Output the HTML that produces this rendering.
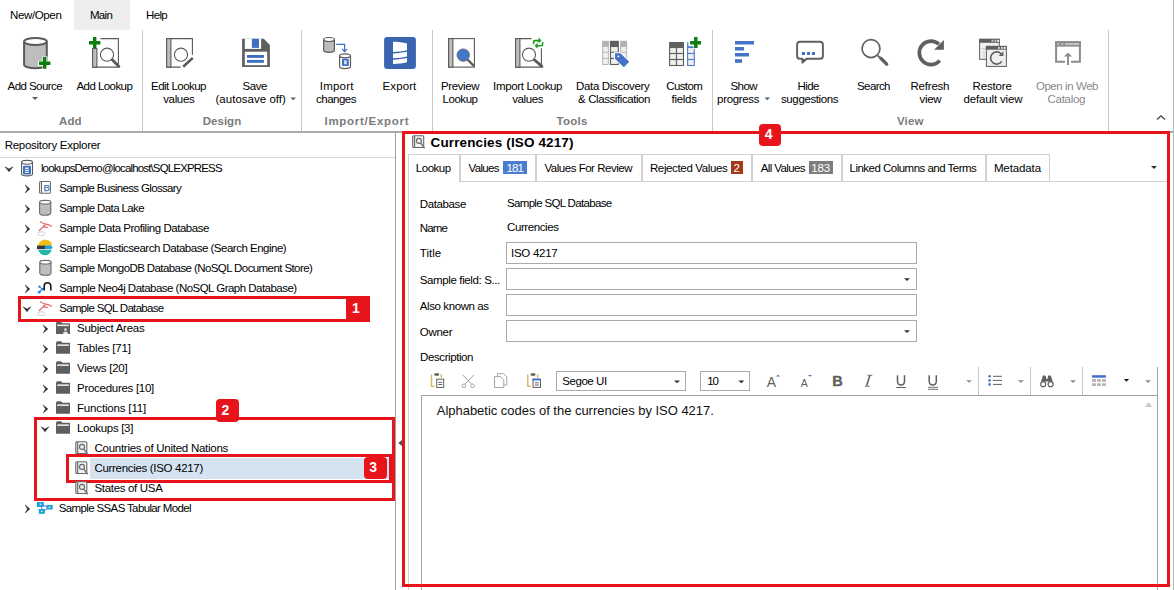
<!DOCTYPE html>
<html><head><meta charset="utf-8"><style>
html,body{margin:0;padding:0;width:1174px;height:590px;overflow:hidden;background:#fff;position:relative;font-family:"Liberation Sans",sans-serif}
.t{position:absolute;white-space:nowrap;line-height:1;color:#000}
.a{position:absolute;box-sizing:border-box}
svg{position:absolute;overflow:visible}
</style></head><body>
<!-- tabs -->
<div class="a" style="left:74px;top:0;width:56px;height:30px;background:#eeeeee"></div>
<!-- ribbon separators -->
<div class="a" style="left:142px;top:30px;width:1px;height:101px;background:#c8c8c8"></div>
<div class="a" style="left:301px;top:30px;width:1px;height:101px;background:#c8c8c8"></div>
<div class="a" style="left:432px;top:30px;width:1px;height:101px;background:#c8c8c8"></div>
<div class="a" style="left:712px;top:30px;width:1px;height:101px;background:#c8c8c8"></div>
<div class="a" style="left:1108px;top:30px;width:1px;height:101px;background:#c8c8c8"></div>
<!-- ribbon bottom -->
<div class="a" style="left:0;top:131px;width:1174px;height:2px;background:#ababab"></div>
<!-- left panel -->
<div class="a" style="left:0;top:157px;width:395px;height:1px;background:#d4d4d4"></div>
<div class="a" style="left:395px;top:133px;width:1px;height:457px;background:#a0a0a0"></div>
<!-- selection -->
<div class="a" style="left:90px;top:458px;width:299px;height:21px;background:#d5e3f1"></div>
<!-- right panel -->
<div class="a" style="left:1173px;top:0;width:1px;height:590px;background:#b4b4b4"></div>
<!-- tabs -->
<div class="a" style="left:408px;top:181px;width:760px;height:1px;background:#d0d0d0"></div>
<div class="a" style="left:408px;top:154px;width:1px;height:436px;background:#d0d0d0"></div>
<div class="a" style="left:408px;top:154px;width:642px;height:1px;background:#d0d0d0"></div>
<div class="a" style="left:459px;top:154px;width:2px;height:28px;background:#d0d0d0"></div>
<div class="a" style="left:409px;top:181px;width:50px;height:1px;background:#fff"></div>
<div class="a" style="left:535px;top:154px;width:2px;height:27px;background:#d0d0d0"></div>
<div class="a" style="left:641px;top:154px;width:2px;height:27px;background:#d0d0d0"></div>
<div class="a" style="left:751px;top:154px;width:2px;height:27px;background:#d0d0d0"></div>
<div class="a" style="left:841px;top:154px;width:2px;height:27px;background:#d0d0d0"></div>
<div class="a" style="left:985px;top:154px;width:2px;height:27px;background:#d0d0d0"></div>
<div class="a" style="left:1049px;top:154px;width:1px;height:27px;background:#d0d0d0"></div>
<!-- badges -->
<div class="a" style="left:503px;top:161px;width:24px;height:13px;background:#4a7dd0"></div>
<div class="a" style="left:731px;top:161px;width:12px;height:13px;background:#a23a1a"></div>
<div class="a" style="left:809px;top:161px;width:24px;height:13px;background:#7d7d7d"></div>
<!-- inputs -->
<div class="a" style="left:506px;top:242px;width:411px;height:22px;border:1px solid #ababab"></div>
<div class="a" style="left:506px;top:268px;width:411px;height:22px;border:1px solid #ababab"></div>
<div class="a" style="left:506px;top:294px;width:411px;height:22px;border:1px solid #ababab"></div>
<div class="a" style="left:506px;top:320px;width:411px;height:22px;border:1px solid #ababab"></div>
<!-- font combos -->
<div class="a" style="left:556px;top:371px;width:130px;height:20px;border:1px solid #ababab"></div>
<div class="a" style="left:700px;top:371px;width:50px;height:20px;border:1px solid #ababab"></div>
<!-- editor -->
<div class="a" style="left:421px;top:395px;width:737px;height:195px;border:1px solid #a0a0a0;border-bottom:none"></div>
<div class="a" style="left:1157px;top:367px;width:1px;height:28px;background:#a0a0a0"></div>
<div class="a" style="left:978px;top:367px;width:1px;height:28px;background:#c8c8c8"></div>
<div class="a" style="left:1030px;top:367px;width:1px;height:28px;background:#c8c8c8"></div>
<div class="a" style="left:1082px;top:367px;width:1px;height:28px;background:#c8c8c8"></div>
<!-- red annotation boxes -->
<div class="a" style="left:402px;top:131px;width:768px;height:456px;border:3px solid #e8141c"></div>
<div class="a" style="left:18px;top:296px;width:331px;height:26px;border:3px solid #e8141c"></div>
<div class="a" style="left:346px;top:296px;width:24px;height:26px;background:#e8141c"></div>
<div class="a" style="left:34px;top:417px;width:361px;height:84px;border:3px solid #e8141c"></div>
<div class="a" style="left:66px;top:454px;width:326px;height:29px;border:3px solid #e8141c"></div>
<div class="a" style="left:216px;top:399px;width:23px;height:23px;background:#e8141c;border-radius:4px"></div>
<div class="a" style="left:364px;top:457px;width:23px;height:22px;background:#e8141c;border-radius:4px"></div>
<div class="a" style="left:759px;top:124px;width:22px;height:22px;background:#e8141c;border-radius:4px"></div>
<svg width="1174" height="590" style="left:0;top:0">
<!-- ===== RIBBON ICONS ===== -->
<!-- Add Source: cylinder + plus -->
<g stroke="#5a5a5a" stroke-width="2">
 <path d="M24.1,41.5 V64.7 A11.35,3.5 0 0 0 46.8,64.7 V41.5" fill="#bdbdbd"/>
 <ellipse cx="35.45" cy="41.5" rx="11.35" ry="3.5" fill="#fff"/>
</g>
<path d="M38,61 h4.5 v-4.5 h5 v4.5 h4.5 v5 h-4.5 v4.5 h-5 v-4.5 h-4.5z" fill="#fff"/>
<path d="M39,61.5 h4 v-4.5 h3.4 v4.5 h4 v3.4 h-4 v3.9 h-3.4 v-3.9 h-4z" fill="#0a7d0a"/>
<!-- Add Lookup -->
<g fill="none" stroke="#5a5a5a" stroke-width="1.1">
 <path d="M100.5,38.6 H118.4 V67.1 H92.6 V48.5"/>
 <rect x="92.6" y="48.5" width="4.3" height="18.6" fill="#bdbdbd"/>
 <circle cx="107" cy="54.7" r="6.6"/>
</g>
<path d="M112.3,59.8 L118.9,66.4" stroke="#5a5a5a" stroke-width="2.8" stroke-linecap="round"/>
<path d="M89,41 h4 v-4 h3.4 v4 h4 v3.4 h-4 v3.8 h-3.4 v-3.8 h-4z" fill="#0a7d0a"/>
<!-- Edit Lookup -->
<g fill="none" stroke="#5a5a5a" stroke-width="1.1">
 <path d="M180.7,67.1 H166.6 V38.6 H192.4 V54.7"/>
 <rect x="166.6" y="38.6" width="4.3" height="28.5" fill="#bdbdbd"/>
 <circle cx="181" cy="54.7" r="6.6"/>
</g>
<path d="M183.2,66.8 L192.8,57.9" stroke="#fff" stroke-width="4.5"/>
<path d="M183.2,66.8 L192.8,57.9" stroke="#5a5a5a" stroke-width="2.6"/>
<!-- Save -->
<path d="M242.1,38.8 H263.8 L269.9,44.9 V66.9 H242.1Z" fill="#5f5f5f"/>
<rect x="244.8" y="38.8" width="16.3" height="10.1" fill="#fff"/>
<rect x="251.9" y="38.8" width="7.1" height="9.1" fill="#3e6fc1"/>
<rect x="244.8" y="51.7" width="22.4" height="13.5" fill="#fff"/>
<rect x="247" y="55" width="16.9" height="2.9" fill="#3e6fc1"/>
<rect x="247" y="59.9" width="16.9" height="2.9" fill="#3e6fc1"/>
<!-- Import changes -->
<g stroke="#5a5a5a" stroke-width="1.2">
 <path d="M323.7,39.5 V50.3 A5.35,2 0 0 0 334.4,50.3 V39.5" fill="#bdbdbd"/>
 <ellipse cx="329.05" cy="39.5" rx="5.35" ry="2" fill="#fff"/>
 <path d="M339.6,55.8 V66.6 A5.45,2 0 0 0 350.5,66.6 V55.8" fill="#fff"/>
 <ellipse cx="345.05" cy="55.8" rx="5.45" ry="2" fill="#fff"/>
</g>
<rect x="342" y="58.8" width="6.8" height="7.1" rx="1" fill="#3e6fc1"/>
<rect x="344" y="60.3" width="2.8" height="4" fill="#cfdcf2"/>
<path d="M336.2,44.4 H344.6 V51" fill="none" stroke="#3e6fc1" stroke-width="1.2"/>
<path d="M342.2,49 L344.6,51.6 L347,49" fill="none" stroke="#3e6fc1" stroke-width="1.2"/>
<!-- Export -->
<rect x="384.1" y="37.1" width="31.8" height="31.8" rx="3.2" fill="#3a64b0"/>
<path d="M393,41.8 C398,41.8 403,42.4 407,43.6 V50.3 C403,51.3 398,51.9 393,52.1Z" fill="#fff"/>
<path d="M393,53.5 C398,53.3 403,52.7 407,51.8 V56.6 C403,57.6 398,58.1 393,58.3Z" fill="#fff"/>
<path d="M393,59.7 C398,59.5 403,58.9 407,58 V62.3 C403,63.4 398,63.9 393,64Z" fill="#fff"/>
<!-- Preview Lookup -->
<g fill="none" stroke="#5a5a5a" stroke-width="1.1">
 <rect x="448.6" y="38.6" width="25.8" height="28.5" fill="#fff"/>
 <rect x="448.6" y="38.6" width="4.3" height="28.5" fill="#bdbdbd"/>
</g>
<path d="M467.5,59.5 L473.9,66" stroke="#5a5a5a" stroke-width="2.4"/>
<circle cx="463.2" cy="55.1" r="6.2" fill="#4577c8" stroke="#5a5a5a" stroke-width="0.8"/>
<!-- Import Lookup values -->
<g fill="none" stroke="#5a5a5a" stroke-width="1.1">
 <path d="M531.4,38.6 H515.6 V67.1 H541.4 V48.3"/>
 <rect x="515.6" y="38.6" width="4.3" height="28.5" fill="#bdbdbd"/>
 <circle cx="529" cy="54.7" r="6.6"/>
</g>
<path d="M534.3,59.8 L541.9,66.4" stroke="#5a5a5a" stroke-width="2.8" stroke-linecap="round"/>
<g fill="none" stroke="#1e9a1e" stroke-width="1.6">
 <path d="M533.6,44.2 V41.8 Q533.6,40.6 535,40.6 H539.6"/>
 <path d="M542.6,42 V44.6 Q542.6,45.8 541.2,45.8 H536.4"/>
</g>
<path d="M538.5,37.6 L541.5,40.6 L538.5,43.6Z" fill="#1e9a1e"/>
<path d="M537.6,42.8 L534.6,45.8 L537.6,48.8Z" fill="#1e9a1e"/>
<!-- Data Discovery -->
<rect x="602.1" y="40.8" width="6.8" height="5.7" fill="#b3b3b3"/>
<rect x="602.6" y="46.5" width="5.8" height="18" fill="#efefef" stroke="#b8b8b8" stroke-width="1"/>
<path d="M602.1,52.3 H608.9 M602.1,58.4 H608.9" stroke="#b8b8b8"/>
<rect x="620.1" y="40.8" width="7" height="5.7" fill="#b3b3b3"/>
<rect x="620.6" y="46.5" width="6" height="18" fill="#efefef" stroke="#b8b8b8" stroke-width="1"/>
<path d="M620.1,52.3 H627.1 M620.1,58.4 H627.1" stroke="#b8b8b8"/>
<rect x="609.9" y="40.8" width="9" height="5.7" fill="#5f5f5f"/>
<rect x="610.5" y="46.5" width="7.8" height="18" fill="#efefef" stroke="#5f5f5f" stroke-width="1.1"/>
<path d="M609.9,52.3 H618.9 M609.9,58.4 H618.9" stroke="#5f5f5f" stroke-width="1.1"/>
<path d="M614,52.3 H620.8 L630.6,62 L623.9,68.6 L614,58.9Z" fill="#fff"/>
<path d="M615,53.3 H620.4 L629.2,61.8 L623.8,67.2 L615,58.7Z" fill="#4472c4"/>
<circle cx="618.4" cy="56.4" r="0.9" fill="#fff"/>
<!-- Custom fields -->
<rect x="669.1" y="42" width="14.9" height="5.5" fill="#5f5f5f"/>
<g fill="#efefef" stroke="#5f5f5f" stroke-width="1.1">
 <rect x="669.6" y="47.5" width="6.9" height="6" />
 <rect x="676.5" y="47.5" width="7" height="6" />
 <rect x="669.6" y="53.5" width="6.9" height="6" />
 <rect x="676.5" y="53.5" width="7" height="6" />
 <rect x="669.6" y="59.5" width="6.9" height="6" />
 <rect x="676.5" y="59.5" width="7" height="6" />
</g>
<g fill="#efefef" stroke="#4a7fd0" stroke-width="1.1">
 <rect x="687.6" y="47.5" width="6.7" height="6" />
 <rect x="687.6" y="53.5" width="6.7" height="6" />
 <rect x="687.6" y="59.5" width="6.7" height="6" />
</g>
<rect x="687.1" y="42" width="1.3" height="6" fill="#4a7fd0"/>
<rect x="687.1" y="46.2" width="7.7" height="1.6" fill="#4a7fd0"/>
<path d="M689,40.4 h4.6 v-4.3 h4.6 v4.3 h4 v4.6 h-4 v4 h-4.6 v-4 h-4.6z" fill="#fff"/>
<path d="M690.1,41 h4 v-3.9 h3.4 v3.9 h3.5 v3.4 h-3.5 v3.5 h-3.4 v-3.5 h-4z" fill="#0a7d0a"/>
<!-- Show progress -->
<g fill="#4472c4">
 <rect x="735" y="41" width="19" height="3.5"/>
 <rect x="735" y="47" width="9" height="3.5"/>
 <rect x="735" y="53" width="14" height="3.5"/>
 <rect x="735" y="59.2" width="7" height="3.6"/>
</g>
<!-- Hide suggestions -->
<path d="M800,41.8 H820 Q822.9,41.8 822.9,44.7 V55.9 Q822.9,58.8 820,58.8 H806.6 L802.4,62.6 V58.8 H800 Q797.1,58.8 797.1,55.9 V44.7 Q797.1,41.8 800,41.8Z" fill="#fff" stroke="#5f5f5f" stroke-width="1.9" stroke-linejoin="round"/>
<path d="M802.2,58.8 V63.8 L806.8,59.6Z" fill="#5f5f5f"/>
<rect x="801.9" y="52" width="3.1" height="3" fill="#4472c4"/>
<rect x="807" y="52" width="3.1" height="3" fill="#4472c4"/>
<rect x="811.9" y="52" width="3.1" height="3" fill="#4472c4"/>
<!-- Search -->
<circle cx="871" cy="48.6" r="8.95" fill="none" stroke="#5f5f5f" stroke-width="1.7"/>
<path d="M877.5,55.3 L880,57.8" stroke="#5f5f5f" stroke-width="1.8"/>
<path d="M880.8,58.3 L886.7,64.1" stroke="#5f5f5f" stroke-width="3.4" stroke-linecap="round"/>
<!-- Refresh -->
<path d="M938.9,44.2 A11.7,11.7 0 1 0 939.8,60.6" fill="none" stroke="#5f5f5f" stroke-width="3.7"/>
<path d="M934.1,49.8 H943.9 V40.1Z" fill="#5f5f5f"/>
<!-- Restore default view -->
<rect x="979.6" y="39.3" width="19.7" height="20" fill="#efefef" stroke="#5f5f5f" stroke-width="1"/>
<rect x="979.1" y="38.8" width="20.7" height="4" fill="#5f5f5f"/>
<path d="M980,48.5 H999 M984,49 V59" stroke="#cfcfcf" stroke-width="1"/>
<rect x="991.5" y="39.8" width="1.8" height="2" fill="#cfcfcf"/>
<rect x="994.5" y="39.8" width="1.8" height="2" fill="#cfcfcf"/>
<rect x="997.3" y="39.8" width="1.8" height="2" fill="#fff"/>
<rect x="986.4" y="46.4" width="20" height="20" fill="#efefef" stroke="#5f5f5f" stroke-width="1"/>
<rect x="985.9" y="45.9" width="21" height="3.8" fill="#5f5f5f"/>
<rect x="998" y="46.9" width="1.8" height="2" fill="#cfcfcf"/>
<rect x="1001" y="46.9" width="1.8" height="2" fill="#cfcfcf"/>
<rect x="1003.8" y="46.9" width="1.8" height="2" fill="#fff"/>
<path d="M1001,53.6 A6.1,6.1 0 1 0 1001.8,61.4" fill="none" stroke="#5f5f5f" stroke-width="1.6"/>
<path d="M998.6,56 H1003.4 V51.2Z" fill="#5f5f5f"/>
<!-- Open in web catalog -->
<path d="M1065,61.8 H1056.1 V42.2 H1079.9 V61.8 H1071" fill="none" stroke="#8c8c8c" stroke-width="2"/>
<rect x="1055.1" y="41.2" width="25.8" height="5.4" fill="#8c8c8c"/>
<rect x="1057.3" y="43.1" width="2" height="1.8" fill="#c8c8c8"/>
<rect x="1061.3" y="43.1" width="2" height="1.8" fill="#c8c8c8"/>
<rect x="1065" y="43.1" width="14" height="1.8" fill="#c8c8c8"/>
<path d="M1068,56 V64.9" stroke="#8c8c8c" stroke-width="1.9"/>
<path d="M1063.9,56.4 H1072.1 L1068,52.6Z" fill="#8c8c8c"/>
<!-- ribbon dropdown arrows -->
<path d="M32,97 H38 L35,100Z" fill="#5a5a5a"/>
<path d="M290.5,97.6 H296 L293.2,100.3Z" fill="#5a5a5a"/>
<path d="M764.6,97.6 H770 L767.3,100.3Z" fill="#5a5a5a"/>
<!-- collapse ribbon ^ -->
<path d="M1157,119.5 L1161,115.8 L1165,119.5" fill="none" stroke="#444" stroke-width="1.3"/>
</svg>
<svg width="1174" height="590" style="left:0;top:0">
<!-- ===== TREE CHEVRONS ===== -->
<path d="M25.2,185.1 L29.9,189 L25.2,192.9 L27.5,189Z M25.2,205.1 L29.9,209 L25.2,212.9 L27.5,209Z M25.2,225.1 L29.9,229 L25.2,232.9 L27.5,229Z M25.2,245.1 L29.9,249 L25.2,252.9 L27.5,249Z M25.2,265.1 L29.9,269 L25.2,272.9 L27.5,269Z M25.2,285.1 L29.9,289 L25.2,292.9 L27.5,289Z M43.2,325.1 L47.900000000000006,329 L43.2,332.9 L45.5,329Z M43.2,345.1 L47.900000000000006,349 L43.2,352.9 L45.5,349Z M43.2,365.1 L47.900000000000006,369 L43.2,372.9 L45.5,369Z M43.2,385.1 L47.900000000000006,389 L43.2,392.9 L45.5,389Z M43.2,405.1 L47.900000000000006,409 L43.2,412.9 L45.5,409Z M25.2,505.1 L29.9,509 L25.2,512.9 L27.5,509Z M5.1,166.8 L9,171.8 L12.9,166.8 L9,169Z M23.1,306.8 L27,311.8 L30.9,306.8 L27,309Z M41.1,426.8 L45,431.8 L48.9,426.8 L45,429Z " fill="#2e2e2e" stroke="#2e2e2e" stroke-width="0.5" stroke-linejoin="round"/>
<!-- row0 db icon -->
<g stroke="#5a5a5a" stroke-width="1.1" fill="#fff">
 <path d="M21.6,162.3 V174 A5.45,1.9 0 0 0 32.5,174 V162.3"/>
 <ellipse cx="27.05" cy="162.3" rx="5.45" ry="1.9"/>
</g>
<rect x="23" y="165.8" width="8" height="8.6" rx="1.2" fill="#3e6fc1"/>
<path d="M25,167.6 h3.8 v1.4 h-3.8z M25,169.8 h3.8 v1.4 h-3.8z M25,172 h3.8 v1.0 h-3.8z" fill="#dfe8f6"/>
<!-- row1 glossary -->
<rect x="39.6" y="181.5" width="10.8" height="11.8" rx="1" fill="#fff" stroke="#6a6a6a" stroke-width="1.1"/>
<path d="M41.5,181.8 V193" stroke="#6a6a6a" stroke-width="1.1"/>
<text x="43.6" y="191.2" font-family="Liberation Sans" font-size="9.5" fill="#3e6fc1" stroke="#3e6fc1" stroke-width="0.25">B</text>
<!-- row2 data lake cylinder -->
<g stroke="#6a6a6a" stroke-width="1.1">
 <path d="M39.6,202.2 V213.2 A5.6,2 0 0 0 50.8,213.2 V202.2" fill="#bdbdbd"/>
 <ellipse cx="45.2" cy="202.2" rx="5.6" ry="1.8" fill="#fff"/>
</g>
<!-- row3 SQL server icon -->
<g fill="none" stroke-linecap="round">
 <path d="M39.3,230.5 L46,224.2 M40.5,221.8 Q44,224 46,224.2 Q49,224.5 51.5,226.3 M43.5,226 Q45.5,228 47.5,227.3" stroke="#e86a6a" stroke-width="1.2"/>
 <path d="M37.5,233 Q40,231 43.5,232 Q46,233.5 44,235.3 Q40.5,236.5 37.5,234.5" stroke="#c9d2de" stroke-width="1"/>
</g>
<!-- row4 elasticsearch -->
<path d="M38.5,244.3 A7.6,7.6 0 0 1 51.3,242.5 L51.3,244.8 Z" fill="#f0bf1a"/>
<path d="M38,244.8 H51.8 A7.6,7.6 0 0 1 38,244.8Z" fill="#f0bf1a"/>
<path d="M38.5,244 Q41,240 45,240 Q49,240 51.6,243.5 L51.6,245 H38Z" fill="#f0bf1a"/>
<rect x="37" y="245.6" width="8.5" height="3.6" fill="#343741"/>
<rect x="44.8" y="245.6" width="7.5" height="3.6" rx="1.6" fill="#1ba3e0"/>
<path d="M38,250 H51.8 Q49.5,255.3 45,255.3 Q40.5,255.3 38,250Z" fill="#22b5a8"/>
<!-- row5 mongodb cylinder -->
<g stroke="#6a6a6a" stroke-width="1.1">
 <path d="M39.8,262.2 V273.3 A5.6,2 0 0 0 51,273.3 V262.2" fill="#bdbdbd"/>
 <ellipse cx="45.4" cy="262.2" rx="5.6" ry="1.8" fill="#fff"/>
</g>
<!-- row6 neo4j -->
<path d="M39.5,292 L42.5,289 L39.5,287" fill="none" stroke="#1e88e5" stroke-width="1.1"/>
<circle cx="39.2" cy="292.2" r="1.4" fill="#1e88e5"/>
<circle cx="39.4" cy="286.6" r="1.2" fill="#1e88e5"/>
<circle cx="42.8" cy="289" r="1.2" fill="#1e88e5"/>
<path d="M44.2,290.5 V286 A3.3,3.3 0 0 1 50.8,286 V290.5" fill="none" stroke="#1a1a1a" stroke-width="1.6"/>
<!-- row7 SQL server icon -->
<g fill="none" stroke-linecap="round">
 <path d="M39.3,310.5 L46,304.2 M40.5,301.8 Q44,304 46,304.2 Q49,304.5 51.5,306.3 M43.5,306 Q45.5,308 47.5,307.3" stroke="#e86a6a" stroke-width="1.2"/>
 <path d="M37.5,313 Q40,311 43.5,312 Q46,313.5 44,315.3 Q40.5,316.5 37.5,314.5" stroke="#c9d2de" stroke-width="1"/>
</g>
<!-- folders level 2 -->
<g fill="#5f5f5f">
 <path d="M56,323.5 Q56,321.7 57.5,321.7 H61 L62.5,323.3 H70 V334 H56Z"/>
 <path d="M56,343 Q56,341.2 57.5,341.2 H61 L62.5,342.8 H70 V353.8 H56Z"/>
 <path d="M56,363 Q56,361.2 57.5,361.2 H61 L62.5,362.8 H70 V373.8 H56Z"/>
 <path d="M56,383 Q56,381.2 57.5,381.2 H61 L62.5,382.8 H70 V393.8 H56Z"/>
 <path d="M56,403 Q56,401.2 57.5,401.2 H61 L62.5,402.8 H70 V413.8 H56Z"/>
 <path d="M56,423 Q56,421.2 57.5,421.2 H61 L62.5,422.8 H70 V433.8 H56Z"/>
</g>
<g fill="#f2f2f2">
 <rect x="57.2" y="324.6" width="11.6" height="1.5"/>
 <rect x="57.2" y="344.4" width="11.6" height="1.5"/>
 <rect x="57.2" y="364.4" width="11.6" height="1.5"/>
 <rect x="57.2" y="384.4" width="11.6" height="1.5"/>
 <rect x="57.2" y="404.4" width="11.6" height="1.5"/>
 <rect x="57.2" y="424.4" width="11.6" height="1.5"/>
</g>
<circle cx="65.5" cy="329.5" r="1.3" fill="#e8e8e8"/>
<path d="M63,334 Q63,331.5 65.5,331.5 Q68,331.5 68,334Z" fill="#e8e8e8"/>
<!-- lookup icons level3 -->
<rect x="75.8" y="441.7" width="11" height="11.8" rx="1" fill="#f2f2f2" stroke="#666" stroke-width="1.1"/>
<path d="M77.7,442 V453.3" stroke="#666" stroke-width="1.1"/>
<circle cx="82" cy="446.9" r="2.5" fill="#eee" stroke="#666" stroke-width="1.1"/>
<path d="M83.7,449 L87.7,454.2" stroke="#777" stroke-width="1.4"/>
<rect x="75.8" y="461.7" width="11" height="11.8" rx="1" fill="#f2f2f2" stroke="#666" stroke-width="1.1"/>
<path d="M77.7,462 V473.3" stroke="#666" stroke-width="1.1"/>
<circle cx="82" cy="466.9" r="2.5" fill="#eee" stroke="#666" stroke-width="1.1"/>
<path d="M83.7,469 L87.7,474.2" stroke="#777" stroke-width="1.4"/>
<rect x="75.8" y="481.7" width="11" height="11.8" rx="1" fill="#f2f2f2" stroke="#666" stroke-width="1.1"/>
<path d="M77.7,482 V493.3" stroke="#666" stroke-width="1.1"/>
<circle cx="82" cy="486.9" r="2.5" fill="#eee" stroke="#666" stroke-width="1.1"/>
<path d="M83.7,489 L87.7,494.2" stroke="#777" stroke-width="1.4"/>

<!-- SSAS -->
<path d="M40.5,504.5 L43,511.5 L49.5,507.3Z" fill="none" stroke="#9b59d6" stroke-width="1"/>
<rect x="37" y="502" width="6.8" height="5" fill="#1aa3d3"/>
<rect x="46.5" y="505" width="6.2" height="4.5" fill="#1aa3d3"/>
<rect x="38.8" y="509" width="6" height="4.8" fill="#1aa3d3"/>
<circle cx="40.5" cy="504.3" r="0.8" fill="#fff"/>
<circle cx="49.5" cy="507.3" r="0.8" fill="#fff"/>
<circle cx="41.7" cy="511.3" r="0.8" fill="#fff"/>
<!-- splitter arrow -->
<path d="M402,440 L398.3,443 L402,446.1Z" fill="#505050"/>
<!-- ===== RIGHT PANEL ===== -->
<!-- header lookup icon -->
<rect x="412.7" y="135.7" width="11" height="11.8" rx="1" fill="#f2f2f2" stroke="#666" stroke-width="1.1"/>
<path d="M414.6,136 V147.3" stroke="#666" stroke-width="1.1"/>
<circle cx="418.9" cy="140.9" r="2.5" fill="#eee" stroke="#666" stroke-width="1.1"/>
<path d="M420.6,143 L424.6,148.2" stroke="#777" stroke-width="1.4"/>
<!-- tab dropdown -->
<path d="M1151,166 H1157 L1154,169Z" fill="#303030"/>
<!-- combo arrows -->
<path d="M904,278.2 H910 L907,281Z" fill="#303030"/>
<path d="M904,330.2 H910 L907,333Z" fill="#303030"/>
<path d="M674,380.5 H680 L677,383.3Z" fill="#303030"/>
<path d="M738.3,380.5 H744.3 L741.3,383.3Z" fill="#303030"/>
<!-- toolbar: paste1 -->
<path d="M431.5,374.5 V386.4 H434.5" fill="none" stroke="#e3b062" stroke-width="1.4"/>
<path d="M441.3,374.3 V377.8" stroke="#e3b062" stroke-width="1.4"/>
<rect x="434.3" y="373.3" width="4.8" height="2.5" rx="1" fill="#5f5f5f"/>
<rect x="436.7" y="379.2" width="7" height="8.2" fill="#fff" stroke="#5f5f5f" stroke-width="1"/>
<path d="M438.3,382.3 H442.2 M438.3,384.5 H442.2" stroke="#5f5f5f" stroke-width="1"/>
<!-- cut -->
<g fill="none" stroke="#a6a6a6" stroke-width="1">
 <circle cx="464" cy="385.8" r="1.8"/>
 <circle cx="472.6" cy="385.8" r="1.8"/>
 <path d="M465,384.2 L474,374.8 M471.6,384.2 L462.6,374.8"/>
</g>
<!-- copy -->
<g fill="#fff" stroke="#a6a6a6" stroke-width="1">
 <path d="M497.5,373.6 H503.5 L506.8,376.9 V385 H497.5Z"/>
 <path d="M494.5,376.6 H500.5 L503.8,379.9 V387.5 H494.5Z"/>
</g>
<!-- paste2 -->
<path d="M527.8,374.5 V386.4 H530.8" fill="none" stroke="#e3b062" stroke-width="1.4"/>
<path d="M537.6,374.3 V377.8" stroke="#e3b062" stroke-width="1.4"/>
<rect x="530.6" y="373.3" width="4.8" height="2.5" rx="1" fill="#5f5f5f"/>
<rect x="533" y="379.2" width="7.5" height="8.2" fill="#fff" stroke="#5f5f5f" stroke-width="1"/>
<rect x="532.5" y="378.7" width="8.5" height="1.8" fill="#4472c4"/>
<path d="M534.8,382.8 H538.8 M534.8,385 H538.8" stroke="#5f5f5f" stroke-width="1"/>
<!-- grow/shrink font -->
<text x="766.8" y="387" font-family="Liberation Sans" font-size="14" fill="#5f5f5f">A</text>
<path d="M776,376.5 H780 L778,374.8Z" fill="#4472c4"/>
<text x="800.7" y="387" font-family="Liberation Sans" font-size="10.5" fill="#5f5f5f">A</text>
<path d="M808,375 H812 L810,376.7Z" fill="#4472c4"/>
<text x="832.2" y="386.3" font-family="Liberation Sans" font-weight="bold" font-size="14.5" fill="#5f5f5f" stroke="#5f5f5f" stroke-width="0.4">B</text>
<path d="M869.8,375.5 L866.6,386" stroke="#5f5f5f" stroke-width="1.5"/><path d="M867.5,375.3 H872.3 M865,386.2 H869.8" stroke="#5f5f5f" stroke-width="0.9"/>
<!-- underline -->
<path d="M897.5,375.2 V381 Q897.5,385 901,385 Q904.5,385 904.5,381 V375.2" fill="none" stroke="#5f5f5f" stroke-width="1.5"/>
<path d="M896.3,387.5 H905.8" stroke="#5f5f5f" stroke-width="1"/>
<path d="M929.2,375.2 V381 Q929.2,385 932.8,385 Q936.3,385 936.3,381 V375.2" fill="none" stroke="#5f5f5f" stroke-width="1.5"/>
<path d="M928,387.3 H938 M928,389.3 H938" stroke="#5f5f5f" stroke-width="0.9"/>
<path d="M966.2,380.3 H971.8 L969,382.8Z" fill="#8a8a8a"/>
<!-- list -->
<circle cx="989.6" cy="376.3" r="1.3" fill="#4472c4"/>
<circle cx="989.6" cy="380.4" r="1.3" fill="#4472c4"/>
<circle cx="989.6" cy="384.4" r="1.3" fill="#4472c4"/>
<path d="M993,376.3 H1002 M993,380.4 H1002 M993,384.4 H1002" stroke="#5f5f5f" stroke-width="1"/>
<path d="M1017.7,380.3 H1024 L1020.8,382.8Z" fill="#8a8a8a"/>
<!-- binoculars -->
<path d="M1041,381.5 L1043,375.5 H1045.5 L1046.4,379 H1047.4 L1048.3,375.5 H1050.8 L1052.8,381.5Z" fill="#5f5f5f"/>
<circle cx="1043.2" cy="384.2" r="2.5" fill="#fff" stroke="#5f5f5f" stroke-width="1.2"/>
<circle cx="1050.6" cy="384.2" r="2.5" fill="#fff" stroke="#5f5f5f" stroke-width="1.2"/>
<path d="M1069.9,380.3 H1076 L1073,383Z" fill="#8a8a8a"/>
<!-- table -->
<rect x="1092" y="375.2" width="13.9" height="2.5" fill="#4472c4"/>
<g fill="#b5b5b5">
 <rect x="1092" y="379.1" width="4" height="2.7"/><rect x="1097" y="379.1" width="4" height="2.7"/><rect x="1102" y="379.1" width="4" height="2.7"/>
 <rect x="1092" y="383.3" width="4" height="2.7"/><rect x="1097" y="383.3" width="4" height="2.7"/><rect x="1102" y="383.3" width="4" height="2.7"/>
</g>
<path d="M1123.9,378.9 H1129.1 L1126.5,381.8Z" fill="#111"/>
<path d="M1145.2,380.3 H1151 L1148.1,383Z" fill="#8a8a8a"/>
<!-- editor scroll up -->
<path d="M1145,407 H1152.2 L1148.6,402Z" fill="#c8c8c8"/>
</svg>

<div class="t" style="left:10.0px;top:10.0px;font-size:11.5px;letter-spacing:-0.362px">New/Open</div>
<div class="t" style="left:90.0px;top:10.0px;font-size:11.5px;letter-spacing:-0.709px">Main</div>
<div class="t" style="left:146.0px;top:10.0px;font-size:11.5px;letter-spacing:-0.650px">Help</div>
<div class="t" style="left:7.6px;top:81.0px;font-size:11.5px;letter-spacing:-0.566px">Add Source</div>
<div class="t" style="left:76.5px;top:81.0px;font-size:11.5px;letter-spacing:-0.565px">Add Lookup</div>
<div class="t" style="left:151.0px;top:81.0px;font-size:11.5px;letter-spacing:-0.524px">Edit Lookup</div>
<div class="t" style="left:163.2px;top:94.0px;font-size:11.5px;letter-spacing:-0.348px">values</div>
<div class="t" style="left:242.5px;top:81.0px;font-size:11.5px;letter-spacing:-0.404px">Save</div>
<div class="t" style="left:215.5px;top:94.0px;font-size:11.5px;letter-spacing:0.023px">(autosave off)</div>
<div class="t" style="left:319.8px;top:81.0px;font-size:11.5px;letter-spacing:0.202px">Import</div>
<div class="t" style="left:316.1px;top:94.0px;font-size:11.5px;letter-spacing:-0.513px">changes</div>
<div class="t" style="left:382.5px;top:81.0px;font-size:11.5px;letter-spacing:0.113px">Export</div>
<div class="t" style="left:441.0px;top:81.0px;font-size:11.5px;letter-spacing:-0.400px">Preview</div>
<div class="t" style="left:442.5px;top:94.0px;font-size:11.5px;letter-spacing:-0.446px">Lookup</div>
<div class="t" style="left:493.1px;top:81.0px;font-size:11.5px;letter-spacing:-0.343px">Import Lookup</div>
<div class="t" style="left:512.2px;top:94.0px;font-size:11.5px;letter-spacing:-0.388px">values</div>
<div class="t" style="left:576.0px;top:81.0px;font-size:11.5px;letter-spacing:-0.328px">Data Discovery</div>
<div class="t" style="left:578.1px;top:94.0px;font-size:11.5px;letter-spacing:-0.414px">&amp; Classification</div>
<div class="t" style="left:666.2px;top:81.0px;font-size:11.5px;letter-spacing:-0.604px">Custom</div>
<div class="t" style="left:671.5px;top:94.0px;font-size:11.5px;letter-spacing:-0.289px">fields</div>
<div class="t" style="left:730.5px;top:81.0px;font-size:11.5px;letter-spacing:-0.589px">Show</div>
<div class="t" style="left:717.1px;top:94.0px;font-size:11.5px;letter-spacing:-0.335px">progress</div>
<div class="t" style="left:797.5px;top:81.0px;font-size:11.5px;letter-spacing:-0.550px">Hide</div>
<div class="t" style="left:781.0px;top:94.0px;font-size:11.5px;letter-spacing:-0.387px">suggestions</div>
<div class="t" style="left:857.0px;top:81.0px;font-size:11.5px;letter-spacing:-0.587px">Search</div>
<div class="t" style="left:910.5px;top:81.0px;font-size:11.5px;letter-spacing:-0.211px">Refresh</div>
<div class="t" style="left:919.5px;top:94.0px;font-size:11.5px;letter-spacing:-0.335px">view</div>
<div class="t" style="left:972.5px;top:81.0px;font-size:11.5px;letter-spacing:-0.144px">Restore</div>
<div class="t" style="left:963.5px;top:94.0px;font-size:11.5px;letter-spacing:-0.157px">default view</div>
<div class="t" style="left:1035.9px;top:81.0px;font-size:11.5px;letter-spacing:-0.431px;color:#8a8a8a">Open in Web</div>
<div class="t" style="left:1047.5px;top:94.0px;font-size:11.5px;letter-spacing:-0.273px;color:#8a8a8a">Catalog</div>
<div class="t" style="left:59.0px;top:116.0px;font-size:11.5px;letter-spacing:0.073px;font-weight:bold;color:#7b7b7b">Add</div>
<div class="t" style="left:202.7px;top:116.0px;font-size:11.5px;letter-spacing:0.032px;font-weight:bold;color:#7b7b7b">Design</div>
<div class="t" style="left:324.5px;top:116.0px;font-size:11.5px;letter-spacing:0.717px;font-weight:bold;color:#7b7b7b">Import/Export</div>
<div class="t" style="left:556.5px;top:116.0px;font-size:11.5px;letter-spacing:0.297px;font-weight:bold;color:#7b7b7b">Tools</div>
<div class="t" style="left:896.9px;top:116.0px;font-size:11.5px;letter-spacing:0.200px;font-weight:bold;color:#7b7b7b">View</div>
<div class="t" style="left:4.7px;top:140.0px;font-size:11.5px;letter-spacing:-0.277px">Repository Explorer</div>
<div class="t" style="left:40.9px;top:163.0px;font-size:11.5px;letter-spacing:-0.845px">lookupsDemo@localhost\SQLEXPRESS</div>
<div class="t" style="left:59.2px;top:183.0px;font-size:11.5px;letter-spacing:-0.644px">Sample Business Glossary</div>
<div class="t" style="left:59.2px;top:203.0px;font-size:11.5px;letter-spacing:-0.614px">Sample Data Lake</div>
<div class="t" style="left:59.2px;top:223.0px;font-size:11.5px;letter-spacing:-0.464px">Sample Data Profiling Database</div>
<div class="t" style="left:59.2px;top:243.0px;font-size:11.5px;letter-spacing:-0.495px">Sample Elasticsearch Database (Search Engine)</div>
<div class="t" style="left:59.2px;top:263.0px;font-size:11.5px;letter-spacing:-0.591px">Sample MongoDB Database (NoSQL Document Store)</div>
<div class="t" style="left:59.2px;top:283.0px;font-size:11.5px;letter-spacing:-0.521px">Sample Neo4j Database (NoSQL Graph Database)</div>
<div class="t" style="left:59.2px;top:303.0px;font-size:11.5px;letter-spacing:-0.673px">Sample SQL Database</div>
<div class="t" style="left:77.0px;top:323.0px;font-size:11.5px;letter-spacing:-0.275px">Subject Areas</div>
<div class="t" style="left:77.0px;top:343.0px;font-size:11.5px;letter-spacing:-0.162px">Tables [71]</div>
<div class="t" style="left:77.0px;top:363.0px;font-size:11.5px;letter-spacing:-0.238px">Views [20]</div>
<div class="t" style="left:77.0px;top:383.0px;font-size:11.5px;letter-spacing:-0.278px">Procedures [10]</div>
<div class="t" style="left:77.0px;top:403.0px;font-size:11.5px;letter-spacing:-0.168px">Functions [11]</div>
<div class="t" style="left:77.0px;top:423.0px;font-size:11.5px;letter-spacing:-0.306px">Lookups [3]</div>
<div class="t" style="left:94.5px;top:443.0px;font-size:11.5px;letter-spacing:-0.263px">Countries of United Nations</div>
<div class="t" style="left:94.5px;top:463.0px;font-size:11.5px;letter-spacing:-0.317px">Currencies (ISO 4217)</div>
<div class="t" style="left:94.5px;top:483.0px;font-size:11.5px;letter-spacing:-0.327px">States of USA</div>
<div class="t" style="left:58.8px;top:503.0px;font-size:11.5px;letter-spacing:-0.637px">Sample SSAS Tabular Model</div>
<div class="t" style="left:430.5px;top:136.0px;font-size:13.5px;letter-spacing:0.134px;font-weight:bold">Currencies (ISO 4217)</div>
<div class="t" style="left:415.8px;top:163.0px;font-size:11.5px;letter-spacing:-0.466px">Lookup</div>
<div class="t" style="left:468.5px;top:163.0px;font-size:11.5px;letter-spacing:-0.662px">Values</div>
<div class="t" style="left:544.5px;top:163.0px;font-size:11.5px;letter-spacing:-0.478px">Values For Review</div>
<div class="t" style="left:649.9px;top:163.0px;font-size:11.5px;letter-spacing:-0.357px">Rejected Values</div>
<div class="t" style="left:760.8px;top:163.0px;font-size:11.5px;letter-spacing:-0.620px">All Values</div>
<div class="t" style="left:849.5px;top:163.0px;font-size:11.5px;letter-spacing:-0.515px">Linked Columns and Terms</div>
<div class="t" style="left:993.9px;top:163.0px;font-size:11.5px;letter-spacing:-0.107px">Metadata</div>
<div class="t" style="left:419.8px;top:199.0px;font-size:11.5px;letter-spacing:-0.376px">Database</div>
<div class="t" style="left:419.8px;top:222.6px;font-size:11.5px;letter-spacing:-0.859px">Name</div>
<div class="t" style="left:419.8px;top:248.0px;font-size:11.5px;letter-spacing:0.000px">Title</div>
<div class="t" style="left:419.8px;top:275.0px;font-size:11.5px;letter-spacing:-0.378px">Sample field: S...</div>
<div class="t" style="left:419.8px;top:300.7px;font-size:11.5px;letter-spacing:-0.404px">Also known as</div>
<div class="t" style="left:419.8px;top:326.5px;font-size:11.5px;letter-spacing:-0.293px">Owner</div>
<div class="t" style="left:420.1px;top:351.8px;font-size:11.5px;letter-spacing:-0.412px">Description</div>
<div class="t" style="left:507.0px;top:198.0px;font-size:11.5px;letter-spacing:-0.668px">Sample SQL Database</div>
<div class="t" style="left:507.0px;top:222.3px;font-size:11.5px;letter-spacing:-0.400px">Currencies</div>
<div class="t" style="left:511.0px;top:248.2px;font-size:11.5px;letter-spacing:-0.270px">ISO 4217</div>
<div class="t" style="left:562.2px;top:376.0px;font-size:11.5px;letter-spacing:-0.421px">Segoe UI</div>
<div class="t" style="left:707.3px;top:376.0px;font-size:11.5px;letter-spacing:-1.292px">10</div>
<div class="t" style="left:436.8px;top:403.8px;font-size:13px;letter-spacing:-0.026px;color:#111">Alphabetic codes of the currencies by ISO 4217.</div>
<div class="t" style="left:351.9px;top:301.0px;font-size:14px;letter-spacing:0.414px;font-weight:bold;color:#fff">1</div>
<div class="t" style="left:221.5px;top:403.0px;font-size:14px;letter-spacing:1.114px;font-weight:bold;color:#fff">2</div>
<div class="t" style="left:369.3px;top:460.0px;font-size:14px;letter-spacing:0.914px;font-weight:bold;color:#fff">3</div>
<div class="t" style="left:764.7px;top:127.0px;font-size:14px;letter-spacing:0.814px;font-weight:bold;color:#fff">4</div>
<div class="t" style="left:506.5px;top:163.0px;font-size:11.5px;letter-spacing:-0.844px;color:#fff">181</div>
<div class="t" style="left:733.5px;top:163.0px;font-size:11.5px;letter-spacing:0.804px;color:#fff">2</div>
<div class="t" style="left:811.2px;top:163.0px;font-size:11.5px;letter-spacing:-0.144px;color:#fff">183</div>
</body></html>
